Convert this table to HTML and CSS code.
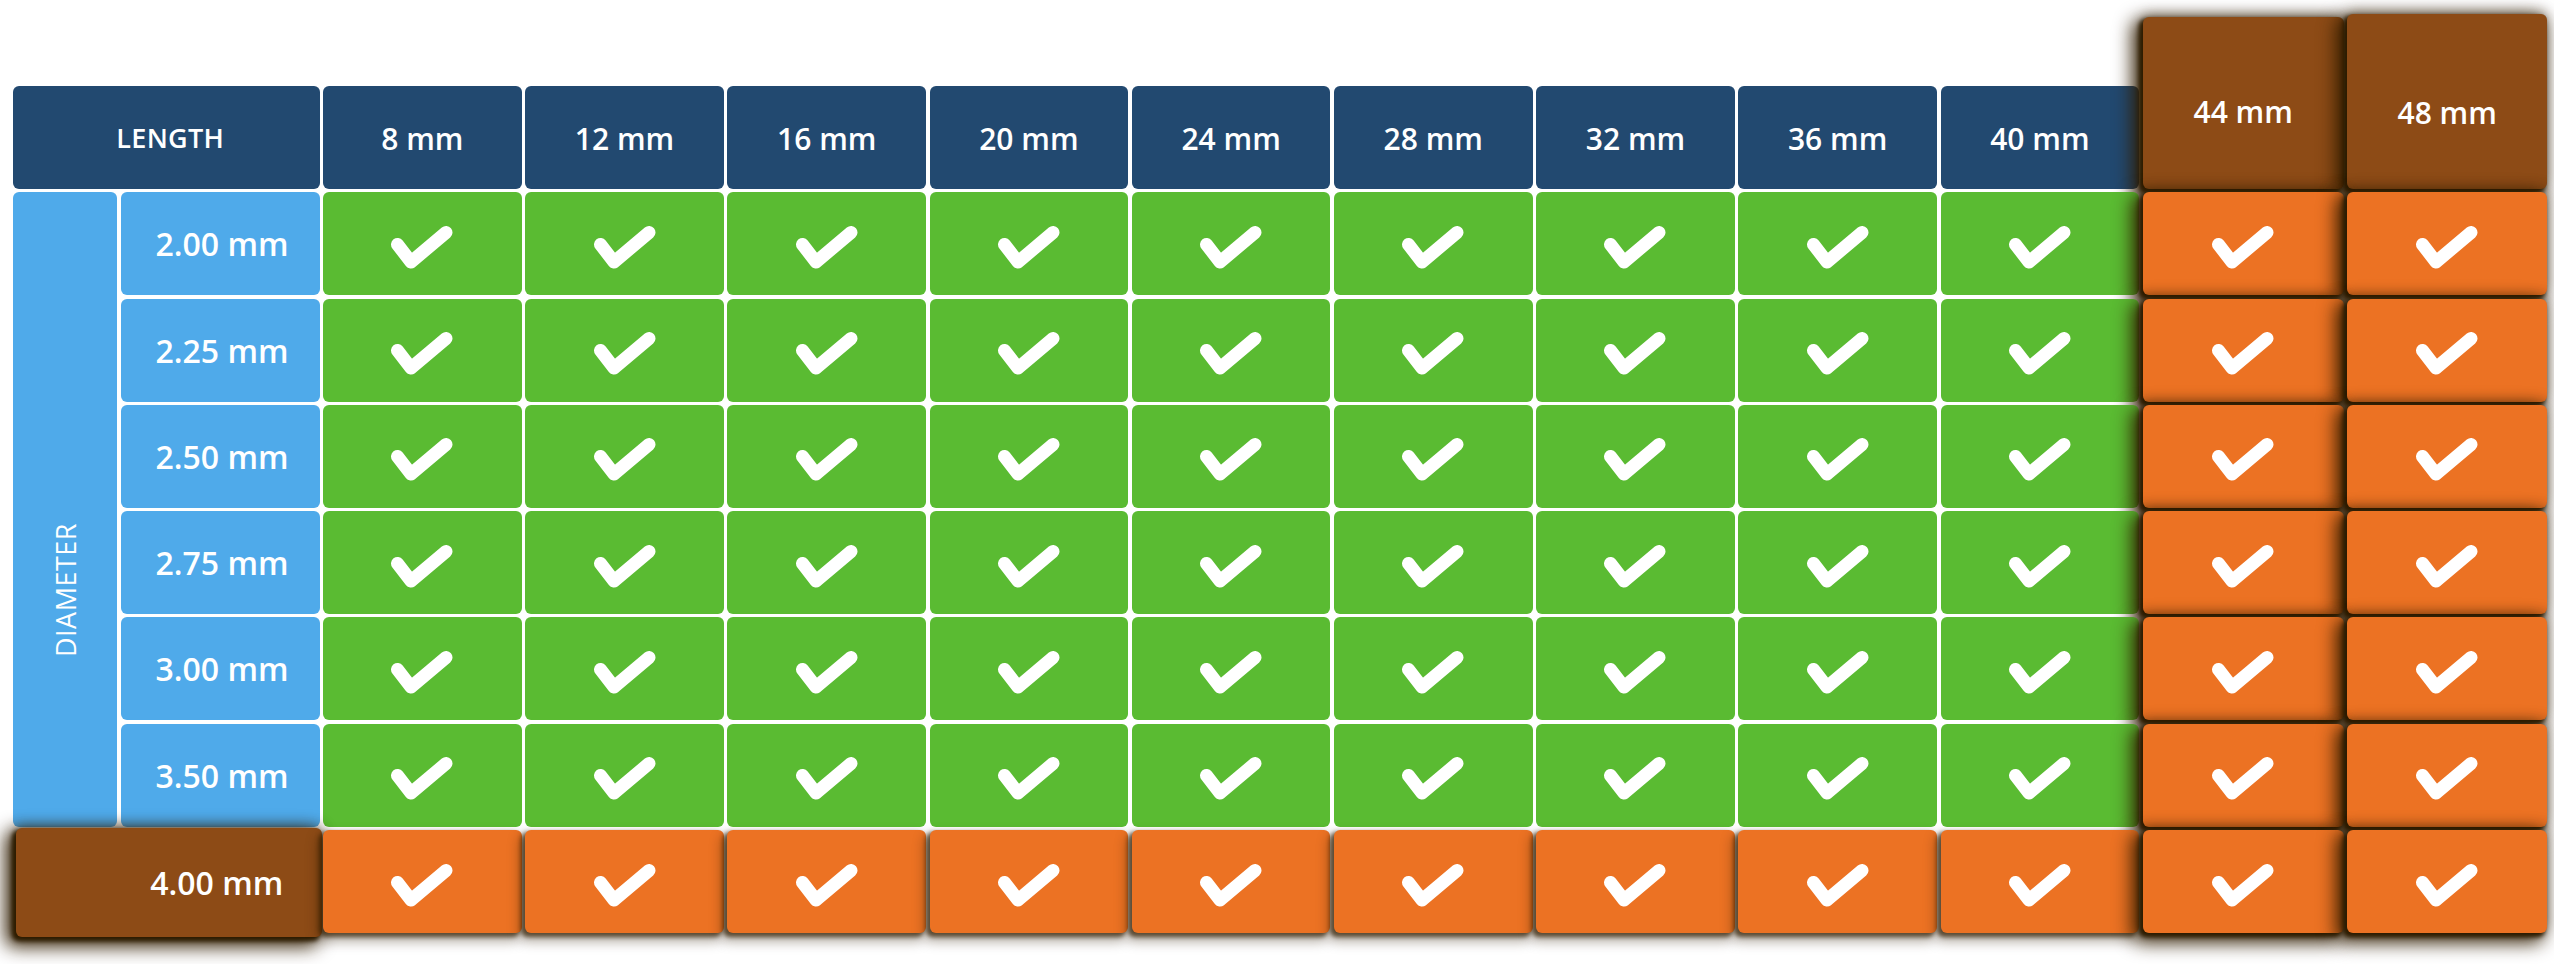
FILE: index.html
```html
<!DOCTYPE html>
<html lang="en">
<head>
<meta charset="utf-8">
<title>Length / Diameter availability</title>
<link rel="stylesheet" href="styles.css">
</head>
<body>
<svg class="defs" width="0" height="0" aria-hidden="true">
  <symbol id="chk" viewBox="0 0 64 46">
    <path d="M7.5 19.5 L21 37 L56 7.5" fill="none" stroke="#fff" stroke-width="13" stroke-linecap="round" stroke-linejoin="round"/>
  </symbol>
</svg>

<div class="chart">
  <div class="row r2">
    <div class="cell navy length">LENGTH</div>
    <div class="cell navy hd">8 mm</div>
    <div class="cell navy hd">12 mm</div>
    <div class="cell navy hd">16 mm</div>
    <div class="cell navy hd">20 mm</div>
    <div class="cell navy hd">24 mm</div>
    <div class="cell navy hd">28 mm</div>
    <div class="cell navy hd">32 mm</div>
    <div class="cell navy hd">36 mm</div>
    <div class="cell navy hd">40 mm</div>
  </div>
  <div class="cell brown hd raised h44">44 mm</div>
  <div class="cell brown hd raised h48">48 mm</div>

  <div class="cell sky diameter"><span>DIAMETER</span></div>

  <div class="row r3">
    <div class="cell sky lbl">2.00 mm</div>
    <div class="cell green"><svg class="ck"><use href="#chk"/></svg></div>
    <div class="cell green"><svg class="ck"><use href="#chk"/></svg></div>
    <div class="cell green"><svg class="ck"><use href="#chk"/></svg></div>
    <div class="cell green"><svg class="ck"><use href="#chk"/></svg></div>
    <div class="cell green"><svg class="ck"><use href="#chk"/></svg></div>
    <div class="cell green"><svg class="ck"><use href="#chk"/></svg></div>
    <div class="cell green"><svg class="ck"><use href="#chk"/></svg></div>
    <div class="cell green"><svg class="ck"><use href="#chk"/></svg></div>
    <div class="cell green"><svg class="ck"><use href="#chk"/></svg></div>
    <div class="cell orange raised"><svg class="ck"><use href="#chk"/></svg></div>
    <div class="cell orange raised"><svg class="ck"><use href="#chk"/></svg></div>
  </div>

  <div class="row r4">
    <div class="cell sky lbl">2.25 mm</div>
    <div class="cell green"><svg class="ck"><use href="#chk"/></svg></div>
    <div class="cell green"><svg class="ck"><use href="#chk"/></svg></div>
    <div class="cell green"><svg class="ck"><use href="#chk"/></svg></div>
    <div class="cell green"><svg class="ck"><use href="#chk"/></svg></div>
    <div class="cell green"><svg class="ck"><use href="#chk"/></svg></div>
    <div class="cell green"><svg class="ck"><use href="#chk"/></svg></div>
    <div class="cell green"><svg class="ck"><use href="#chk"/></svg></div>
    <div class="cell green"><svg class="ck"><use href="#chk"/></svg></div>
    <div class="cell green"><svg class="ck"><use href="#chk"/></svg></div>
    <div class="cell orange raised"><svg class="ck"><use href="#chk"/></svg></div>
    <div class="cell orange raised"><svg class="ck"><use href="#chk"/></svg></div>
  </div>

  <div class="row r5">
    <div class="cell sky lbl">2.50 mm</div>
    <div class="cell green"><svg class="ck"><use href="#chk"/></svg></div>
    <div class="cell green"><svg class="ck"><use href="#chk"/></svg></div>
    <div class="cell green"><svg class="ck"><use href="#chk"/></svg></div>
    <div class="cell green"><svg class="ck"><use href="#chk"/></svg></div>
    <div class="cell green"><svg class="ck"><use href="#chk"/></svg></div>
    <div class="cell green"><svg class="ck"><use href="#chk"/></svg></div>
    <div class="cell green"><svg class="ck"><use href="#chk"/></svg></div>
    <div class="cell green"><svg class="ck"><use href="#chk"/></svg></div>
    <div class="cell green"><svg class="ck"><use href="#chk"/></svg></div>
    <div class="cell orange raised"><svg class="ck"><use href="#chk"/></svg></div>
    <div class="cell orange raised"><svg class="ck"><use href="#chk"/></svg></div>
  </div>

  <div class="row r6">
    <div class="cell sky lbl">2.75 mm</div>
    <div class="cell green"><svg class="ck"><use href="#chk"/></svg></div>
    <div class="cell green"><svg class="ck"><use href="#chk"/></svg></div>
    <div class="cell green"><svg class="ck"><use href="#chk"/></svg></div>
    <div class="cell green"><svg class="ck"><use href="#chk"/></svg></div>
    <div class="cell green"><svg class="ck"><use href="#chk"/></svg></div>
    <div class="cell green"><svg class="ck"><use href="#chk"/></svg></div>
    <div class="cell green"><svg class="ck"><use href="#chk"/></svg></div>
    <div class="cell green"><svg class="ck"><use href="#chk"/></svg></div>
    <div class="cell green"><svg class="ck"><use href="#chk"/></svg></div>
    <div class="cell orange raised"><svg class="ck"><use href="#chk"/></svg></div>
    <div class="cell orange raised"><svg class="ck"><use href="#chk"/></svg></div>
  </div>

  <div class="row r7">
    <div class="cell sky lbl">3.00 mm</div>
    <div class="cell green"><svg class="ck"><use href="#chk"/></svg></div>
    <div class="cell green"><svg class="ck"><use href="#chk"/></svg></div>
    <div class="cell green"><svg class="ck"><use href="#chk"/></svg></div>
    <div class="cell green"><svg class="ck"><use href="#chk"/></svg></div>
    <div class="cell green"><svg class="ck"><use href="#chk"/></svg></div>
    <div class="cell green"><svg class="ck"><use href="#chk"/></svg></div>
    <div class="cell green"><svg class="ck"><use href="#chk"/></svg></div>
    <div class="cell green"><svg class="ck"><use href="#chk"/></svg></div>
    <div class="cell green"><svg class="ck"><use href="#chk"/></svg></div>
    <div class="cell orange raised"><svg class="ck"><use href="#chk"/></svg></div>
    <div class="cell orange raised"><svg class="ck"><use href="#chk"/></svg></div>
  </div>

  <div class="row r8">
    <div class="cell sky lbl">3.50 mm</div>
    <div class="cell green"><svg class="ck"><use href="#chk"/></svg></div>
    <div class="cell green"><svg class="ck"><use href="#chk"/></svg></div>
    <div class="cell green"><svg class="ck"><use href="#chk"/></svg></div>
    <div class="cell green"><svg class="ck"><use href="#chk"/></svg></div>
    <div class="cell green"><svg class="ck"><use href="#chk"/></svg></div>
    <div class="cell green"><svg class="ck"><use href="#chk"/></svg></div>
    <div class="cell green"><svg class="ck"><use href="#chk"/></svg></div>
    <div class="cell green"><svg class="ck"><use href="#chk"/></svg></div>
    <div class="cell green"><svg class="ck"><use href="#chk"/></svg></div>
    <div class="cell orange raised"><svg class="ck"><use href="#chk"/></svg></div>
    <div class="cell orange raised"><svg class="ck"><use href="#chk"/></svg></div>
  </div>

  <div class="row r9">
    <div class="cell brown raised lbl big">4.00 mm</div>
    <div class="cell orange lift"><svg class="ck"><use href="#chk"/></svg></div>
    <div class="cell orange lift"><svg class="ck"><use href="#chk"/></svg></div>
    <div class="cell orange lift"><svg class="ck"><use href="#chk"/></svg></div>
    <div class="cell orange lift"><svg class="ck"><use href="#chk"/></svg></div>
    <div class="cell orange lift"><svg class="ck"><use href="#chk"/></svg></div>
    <div class="cell orange lift"><svg class="ck"><use href="#chk"/></svg></div>
    <div class="cell orange lift"><svg class="ck"><use href="#chk"/></svg></div>
    <div class="cell orange lift"><svg class="ck"><use href="#chk"/></svg></div>
    <div class="cell orange lift"><svg class="ck"><use href="#chk"/></svg></div>
    <div class="cell orange raised"><svg class="ck"><use href="#chk"/></svg></div>
    <div class="cell orange raised"><svg class="ck"><use href="#chk"/></svg></div>
  </div>
</div>
</body>
</html>
```

FILE: styles.css
```css
html, body {
  margin: 0;
  padding: 0;
  background: #ffffff;
}

body {
  font-family: "Open Sans", "DejaVu Sans", sans-serif;
  color: #ffffff;
  min-height: 964px;
}

.defs {
  position: absolute;
  width: 0;
  height: 0;
  overflow: hidden;
}

.chart {
  display: grid;
  grid-template-columns: 104px 199px repeat(9, 198.7px) 201px 200px;
  grid-template-rows: 68.7px repeat(8, 103px);
  gap: 3.3px 3.5px;
  padding: 14px 0 0 13px;
  width: max-content;
}

.row { display: contents; }
.r2 > * { grid-row: 2; }
.r3 > * { grid-row: 3; }
.r4 > * { grid-row: 4; }
.r5 > * { grid-row: 5; }
.r6 > * { grid-row: 6; }
.r7 > * { grid-row: 7; }
.r8 > * { grid-row: 8; }
.r9 > * { grid-row: 9; }

.cell {
  display: flex;
  align-items: center;
  justify-content: center;
  border-radius: 6px;
  color: #ffffff;
  min-width: 0;
}

.navy   { background: #224970; }
.sky    { background: #4faaea; }
.green  { background: #5abb32; }
.orange { background: #ec7223; }
.brown  { background: #8d4b16; }

.hd {
  font-size: 30px;
  font-weight: 600;
  padding-top: 2px;
}

.length {
  grid-column: 1 / 3;
  font-size: 27px;
  font-weight: 600;
  letter-spacing: 0.3px;
  padding-left: 8px;
}

.h44 {
  grid-column: 12;
  grid-row: 1 / 3;
  margin-top: 3px;
  padding-top: 18px;
}

.h48 {
  grid-column: 13;
  grid-row: 1 / 3;
  padding-top: 22px;
}

.diameter {
  grid-column: 1;
  grid-row: 3 / 9;
  padding-top: 160px;
}

.diameter span {
  writing-mode: vertical-rl;
  transform: rotate(180deg);
  font-size: 27px;
  font-weight: 500;
  letter-spacing: 0.5px;
}

.lbl {
  font-size: 32px;
  font-weight: 600;
  padding-left: 4px;
}

.big {
  grid-column: 1 / 3;
  padding-left: 96px;
  margin: -2px -2px -4px 3px;
}

.ck {
  width: 64px;
  height: 46px;
  margin-top: 8px;
}

.raised {
  box-shadow:
    -3px 3px 4px 1px rgb(45, 28, 0),
    -7px 6px 18px 4px rgba(50, 30, 0, 0.95),
    0 -3px 12px rgba(50, 30, 0, 0.35);
}

.lift {
  box-shadow:
    -3px 3px 4px 1px rgba(50, 30, 0, 0.7),
    -4px 7px 12px 2px rgba(50, 30, 0, 0.35);
}
```
